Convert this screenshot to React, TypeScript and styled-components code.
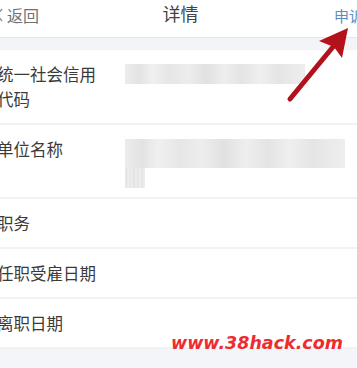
import styled, { createGlobalStyle } from "styled-components";

const GlobalStyle = createGlobalStyle`
  html, body {
    margin: 0;
    padding: 0;
    background: #ffffff;
  }
  body {
    font-family: "Noto Sans CJK SC", "Noto Sans", sans-serif;
    overflow: hidden;
  }
`;

const Page = styled.div({
  position: "relative",
  width: "357px",
  height: "368px",
  overflow: "hidden",
  background: "#f3f5f8",
});

const NavBar = styled.div({
  height: "37px",
  display: "flex",
  alignItems: "center",
  justifyContent: "space-between",
  background: "#ffffff",
  borderBottom: "1px solid #e6e8eb",
  position: "relative",
});

const BackButton = styled.div({
  display: "flex",
  alignItems: "center",
  gap: "3px",
  marginLeft: "-4px",
  color: "#6f7275",
  fontSize: "16px",
  marginTop: "-7px",
});

const NavTitle = styled.div({
  position: "absolute",
  left: 0,
  right: 0,
  top: "-2px",
  textAlign: "center",
  fontSize: "18px",
  color: "#444",
  lineHeight: "30px",
  paddingLeft: "4px",
});

const NavAction = styled.div({
  color: "#5b8fc4",
  fontSize: "15px",
  marginRight: "-7px",
  marginTop: "-7px",
  whiteSpace: "nowrap",
});

const Gap = styled.div({
  height: "12px",
  background: "#f3f4f7",
});

const List = styled.div({
  background: "#ffffff",
});

const Row = styled.div<{ $height: number }>(({ $height }) => ({
  height: `${$height}px`,
  display: "flex",
  boxSizing: "border-box",
  borderBottom: "2px solid #f1f2f4",
  paddingTop: "12px",
}));

const Label = styled.div({
  width: "100px",
  marginLeft: "-3px",
  marginRight: "28px",
  fontSize: "16.5px",
  lineHeight: "25px",
  color: "#3a3a3a",
  flexShrink: 0,
});

const Value = styled.div({
  display: "flex",
  flexDirection: "column",
  paddingTop: "2px",
});

const Blur = styled.div<{ $width: number; $height: number }>(({ $width, $height }) => ({
  width: `${$width}px`,
  height: `${$height}px`,
  background:
    "linear-gradient(90deg, #ececec 0%, #e3e3e3 8%, #f0f0f0 15%, #e6e6e6 25%, #ededed 35%, #e1e1e1 45%, #eeeeee 55%, #e4e4e4 65%, #efefef 75%, #e5e5e5 85%, #eeeeee 100%)",
}));

const Watermark = styled.div({
  position: "absolute",
  left: "171px",
  top: "331px",
  fontFamily: "\"DejaVu Sans\", sans-serif",
  fontWeight: 700,
  fontStyle: "italic",
  fontSize: "17.5px",
  color: "#ee2b2f",
  lineHeight: "24px",
});

const ArrowOverlay = styled.svg({
  position: "absolute",
  left: 0,
  top: 0,
  pointerEvents: "none",
});

export default function App() {
  return (
    <>
      <GlobalStyle />
      <Page>
        <NavBar>
          <BackButton>
            <svg width="8" height="14" viewBox="0 0 8 14">
              <path d="M6 1 L1 7 L6 13" stroke="#8a8d90" strokeWidth="1.3" fill="none" />
            </svg>
            <span>返回</span>
          </BackButton>
          <NavTitle>详情</NavTitle>
          <NavAction>申诉</NavAction>
        </NavBar>
        <Gap />
        <List>
          <Row $height={75}>
            <Label>统一社会信用代码</Label>
            <Value>
              <Blur $width={180} $height={20} />
            </Value>
          </Row>
          <Row $height={74}>
            <Label>单位名称</Label>
            <Value>
              <Blur $width={220} $height={29} />
              <Blur $width={20} $height={20} />
            </Value>
          </Row>
          <Row $height={50}>
            <Label>职务</Label>
          </Row>
          <Row $height={50}>
            <Label>任职受雇日期</Label>
          </Row>
          <Row $height={50}>
            <Label>离职日期</Label>
          </Row>
        </List>
        <Watermark>www.38hack.com</Watermark>
        <ArrowOverlay width="357" height="368" viewBox="0 0 357 368">
          <line x1="290" y1="99" x2="337" y2="42" stroke="#b3121c" strokeWidth="5" strokeLinecap="round" />
          <polygon points="348,28 319,41 334,47 342,58" fill="#b3121c" />
        </ArrowOverlay>
      </Page>
    </>
  );
}
